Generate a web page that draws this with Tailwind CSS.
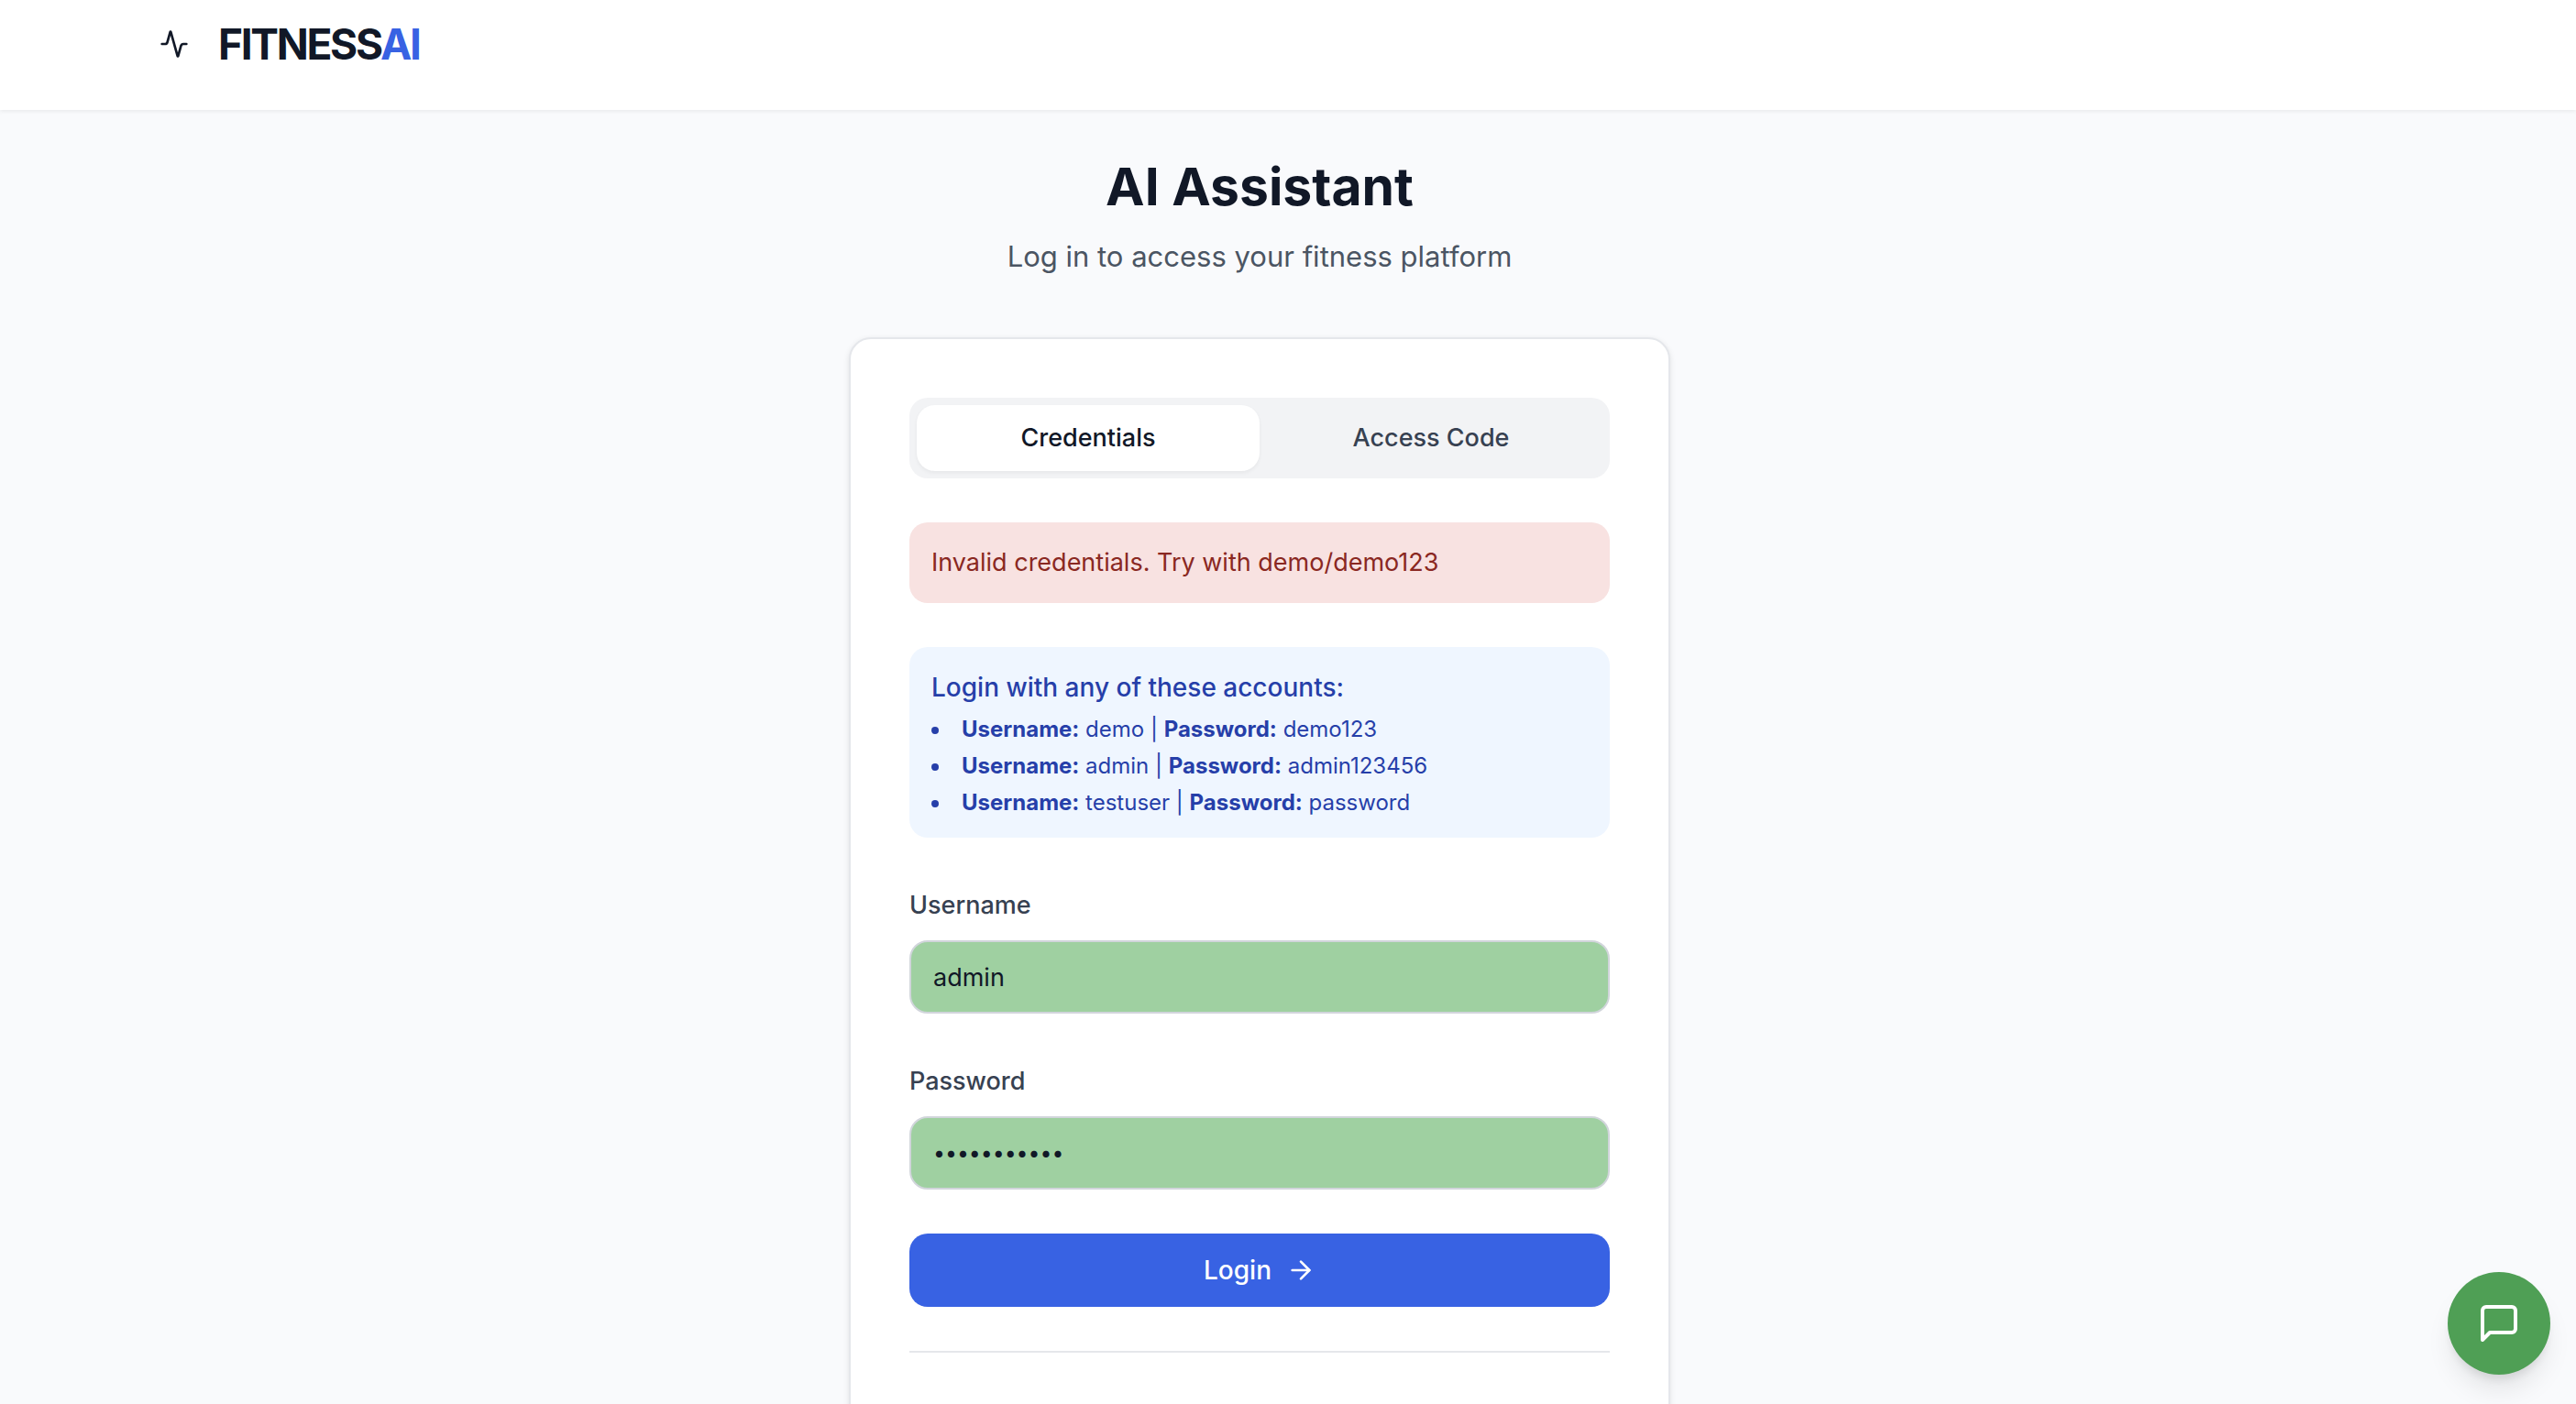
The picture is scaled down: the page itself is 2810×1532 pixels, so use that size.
<!DOCTYPE html>
<html lang="en">
<head>
<meta charset="utf-8">
<meta name="viewport" content="width=device-width, initial-scale=1">
<title>FitnessAI – Login</title>
<script src="https://cdn.jsdelivr.net/npm/@tailwindcss/browser@4"></script>
</head>
<body class="min-h-screen overflow-x-hidden bg-[#f9fafc] font-['Inter',sans-serif] text-[27px] leading-10 text-[#111827]">
  <header class="relative h-[120px] bg-white pr-[62px] shadow-[0_2px_4px_0_rgba(0,0,0,0.06)]">
    <div class="mx-auto flex h-24 max-w-[2432px] items-center gap-4">
      <button type="button" aria-label="Activity" class="flex size-16 items-center justify-center">
        <svg class="size-8" viewBox="0 0 24 24" fill="none" stroke="currentColor" stroke-width="2" stroke-linecap="round" stroke-linejoin="round"><path d="M22 12h-2.48a2 2 0 0 0-1.93 1.46l-2.35 8.36a.25.25 0 0 1-.48 0L9.24 2.18a.25.25 0 0 0-.48 0l-2.35 8.36A2 2 0 0 1 4.49 12H2"/></svg>
      </button>
      <a href="#" class="text-[46px] font-bold tracking-tighter">FITNESS<span class="text-[#3862e3]">AI</span></a>
    </div>
  </header>

  <main class="pt-12 pr-[62px]">
    <div class="mx-auto w-full max-w-[896px]">
      <div class="mb-16 text-center">
        <h1 class="text-[57px] leading-[72px] font-bold">AI Assistant</h1>
        <p class="pt-4 text-[31px] leading-[48px] text-[#4b5563]">Log in to access your fitness platform</p>
      </div>

      <section class="flex flex-col gap-12 rounded-3xl border-2 border-[#e5e7eb] bg-white px-16 pt-16 pb-32 shadow-[0_2px_6px_0_rgba(0,0,0,0.1)]">
        <div role="tablist" class="grid grid-cols-2 rounded-[20px] bg-[#f2f3f5] p-2 font-medium">
          <button type="button" role="tab" aria-selected="true" class="h-[72px] rounded-[20px] bg-white shadow-[0_2px_4px_0_rgba(0,0,0,0.05)]">Credentials</button>
          <button type="button" role="tab" aria-selected="false" class="h-[72px] rounded-[20px] text-[#374151]">Access Code</button>
        </div>

        <div role="alert" class="rounded-[20px] bg-[#f8e2e1] p-6 text-[#8a2822]">Invalid credentials. Try with demo/demo123</div>

        <div class="rounded-[20px] bg-[#eff6ff] px-6 pt-6 pb-[22px] text-[#263fa9]">
          <p class="text-[28px] font-medium">Login with any of these accounts:</p>
          <ul class="mt-[10px] flex list-inside list-disc flex-col gap-2 text-2xl leading-8">
            <li><strong>Username:</strong> demo | <strong>Password:</strong> demo123</li>
            <li><strong>Username:</strong> admin | <strong>Password:</strong> admin123456</li>
            <li><strong>Username:</strong> testuser | <strong>Password:</strong> password</li>
          </ul>
        </div>

        <form class="flex flex-col gap-12">
          <div class="flex flex-col gap-3">
            <label for="username" class="leading-[52px] font-medium text-[#374151]">Username</label>
            <input id="username" type="text" value="admin" class="h-20 w-full rounded-[20px] border-2 border-[#d1d5db] bg-[#9fd0a1] px-6">
          </div>
          <div class="flex flex-col gap-3">
            <label for="password" class="leading-[52px] font-medium text-[#374151]">Password</label>
            <input id="password" type="password" value="admin123456" class="h-20 w-full rounded-[20px] border-2 border-[#d1d5db] bg-[#9fd0a1] px-6 text-[23px]">
          </div>
          <button type="submit" class="flex h-20 items-center justify-center gap-4 rounded-[20px] bg-[#3862e3] text-[28px] font-medium text-white">
            Login
            <svg class="size-8" viewBox="0 0 24 24" fill="none" stroke="currentColor" stroke-width="2" stroke-linecap="round" stroke-linejoin="round"><path d="M5 12h14"/><path d="m12 5 7 7-7 7"/></svg>
          </button>
        </form>

        <hr class="border-t-2 border-[#e5e7eb]">
      </section>
    </div>
  </main>

  <button type="button" aria-label="Open chat" class="fixed right-7 bottom-8 flex size-28 items-center justify-center rounded-full bg-[#4f9f55] text-white shadow-[0_20px_30px_-6px_rgba(0,0,0,0.1),0_8px_12px_-4px_rgba(0,0,0,0.1)]">
    <svg class="size-12" viewBox="0 0 24 24" fill="none" stroke="currentColor" stroke-width="2" stroke-linecap="round" stroke-linejoin="round"><path d="M21 15a2 2 0 0 1-2 2H7l-4 4V5a2 2 0 0 1 2-2h14a2 2 0 0 1 2 2z"/></svg>
  </button>
</body>
</html>
